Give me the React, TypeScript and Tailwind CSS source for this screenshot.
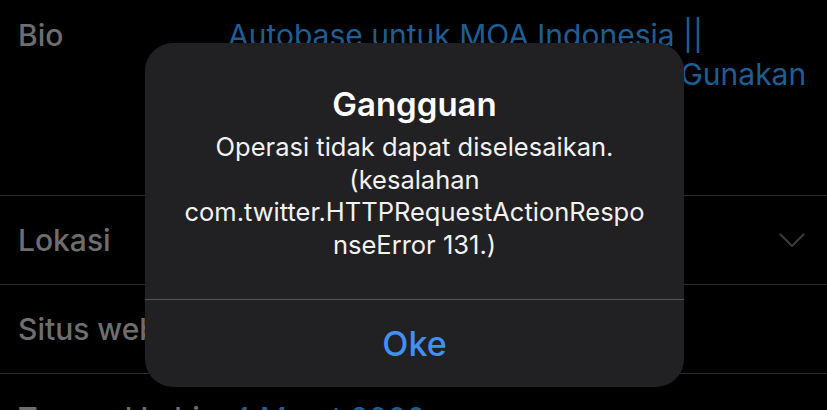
export default function App() {
  return (
    <div className="relative w-[827px] h-[410px] overflow-hidden bg-black font-['Inter',sans-serif]">
      {/* background form rows */}
      <div className="flex flex-col">
        <div className="flex h-[195px] pl-[18px] pt-[16px] text-[30px] leading-[39px]">
          <div className="w-[210px] shrink-0 text-[#6e6e6e] font-medium">Bio</div>
          <div className="whitespace-nowrap text-[#1d5f95]">
            <div>Autobase untuk MOA Indonesia ||</div>
            <div>Sebelum mengirim menfess pls Gunakan</div>
          </div>
        </div>
        <div className="flex h-[89px] items-center justify-between border-t border-[#2a2a2c] pl-[18px] pr-[22px]">
          <div className="text-[30px] font-medium text-[#6e6e6e]">Lokasi</div>
          <svg width="26" height="15" viewBox="0 0 26 15" fill="none">
            <path d="M1.5 1.5 L13 13 L24.5 1.5" stroke="#3a3a3c" strokeWidth="2.2" strokeLinecap="round" strokeLinejoin="round" />
          </svg>
        </div>
        <div className="flex h-[89px] items-center border-t border-[#2a2a2c] pl-[18px]">
          <div className="text-[30px] font-medium text-[#6e6e6e]">Situs web</div>
        </div>
        <div className="flex h-[89px] items-center border-t border-[#2a2a2c] pl-[18px] text-[30px]">
          <div className="w-[214px] shrink-0 font-medium text-[#6e6e6e]">Tanggal Lahir</div>
          <div className="text-[#1d5f95]">4 Maret 2000</div>
        </div>
      </div>

      {/* alert dialog */}
      <div className="absolute left-[145px] top-[43px] flex h-[344px] w-[539px] flex-col rounded-[28px] bg-[#212123]">
        <div className="flex h-[256px] flex-col items-center pt-[44px] text-center text-white">
          <div className="text-[33px] font-semibold leading-[34px]">Gangguan</div>
          <div className="mt-[10px] whitespace-nowrap text-[25.5px] leading-[32.7px] text-[#f2f2f2]">
            <div>Operasi tidak dapat diselesaikan.</div>
            <div>(kesalahan</div>
            <div>com.twitter.HTTPRequestActionRespo</div>
            <div>nseError 131.)</div>
          </div>
        </div>
        <div className="flex flex-1 items-center justify-center border-t border-[#545456]">
          <span className="text-[34px] font-medium text-[#4190f4]">Oke</span>
        </div>
      </div>
    </div>
  );
}
